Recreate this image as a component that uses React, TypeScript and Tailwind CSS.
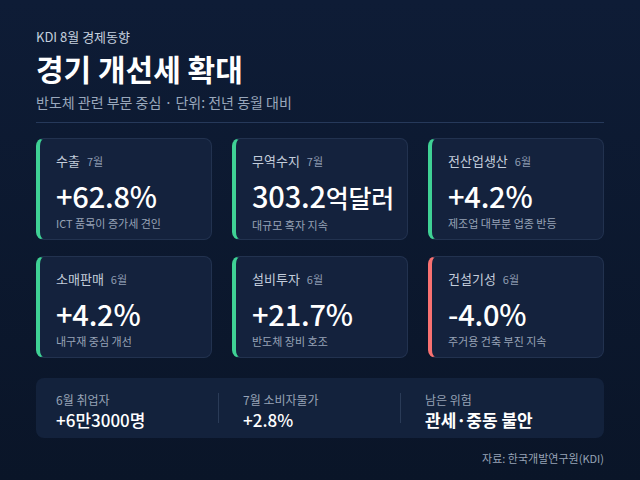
const font = { fontFamily: '"Noto Sans CJK KR", "Noto Sans", sans-serif' }

type Metric = { label: string; month: string; value: string; unit?: string; note: string; down?: boolean }

const metrics: Metric[] = [
  { label: '수출', month: '7월', value: '+62.8%', note: 'ICT 품목이 증가세 견인' },
  { label: '무역수지', month: '7월', value: '303.2', unit: '억달러', note: '대규모 흑자 지속' },
  { label: '전산업생산', month: '6월', value: '+4.2%', note: '제조업 대부분 업종 반등' },
  { label: '소매판매', month: '6월', value: '+4.2%', note: '내구재 중심 개선' },
  { label: '설비투자', month: '6월', value: '+21.7%', note: '반도체 장비 호조' },
  { label: '건설기성', month: '6월', value: '-4.0%', note: '주거용 건축 부진 지속', down: true },
]

function MetricCard({ m }: { m: Metric }) {
  return (
    <div
      className={`h-[102px] rounded-lg border border-[#22324f] border-l-4 bg-[#14223d] pl-4 pr-3 pt-3 ${m.down ? 'border-l-[#f87171]' : 'border-l-[#3fd195]'}`}
    >
      <div className="flex items-baseline leading-[20px]">
        <span className="text-[13px] text-[#c3cddb]">{m.label}</span>
        <span className="ml-[7px] text-[11px] text-[#8e9bb0]">{m.month}</span>
      </div>
      <div className="mt-[6px] whitespace-nowrap text-[29px] font-medium leading-[36px] tracking-[-0.2px] text-white">
        {m.value}
        {m.unit && <span className="text-[25px]">{m.unit}</span>}
      </div>
      <div className="mt-[2px] text-[11px] leading-[16px] text-[#97a3b6]">{m.note}</div>
    </div>
  )
}

export default function App() {
  return (
    <div style={font} className="h-[480px] w-[640px] overflow-hidden bg-gradient-to-b from-[#0e1c36] to-[#0a1528] px-9 pt-[28px]">
      <div className="text-[13px] leading-[18px] text-[#c5d0de]">KDI 8월 경제동향</div>
      <div className="mt-[4px] text-[30px] font-bold leading-[36px] text-white">경기 개선세 확대</div>
      <div className="mt-[6px] text-[14px] leading-[20px] text-[#9aa8bc]">반도체 관련 부문 중심 · 단위: 전년 동월 대비</div>
      <div className="mt-[10px] h-px bg-[#26395a]" />

      <div className="mt-[15px] grid grid-cols-3 gap-x-5 gap-y-4">
        {metrics.map((m) => (
          <MetricCard key={m.label} m={m} />
        ))}
      </div>

      <div className="mt-5 flex h-[60px] items-start rounded-lg bg-[#13223c] px-5 pt-[13px]">
        <div className="w-[162px]">
          <div className="text-[12px] leading-[18px] text-[#97a3b6]">6월 취업자</div>
          <div className="text-[17px] font-medium leading-[22px] text-white">+6만3000명</div>
        </div>
        <div className="mt-[2px] h-[30px] w-px bg-[#2a3b57]" />
        <div className="w-[181px] pl-6">
          <div className="text-[12px] leading-[18px] text-[#97a3b6]">7월 소비자물가</div>
          <div className="text-[17px] font-medium leading-[22px] text-white">+2.8%</div>
        </div>
        <div className="mt-[2px] h-[30px] w-px bg-[#2a3b57]" />
        <div className="flex-1 pl-6">
          <div className="text-[12px] leading-[18px] text-[#97a3b6]">남은 위험</div>
          <div className="text-[17px] font-semibold leading-[22px] text-white">관세·중동 불안</div>
        </div>
      </div>

      <div className="mt-3 text-right text-[11px] leading-[16px] text-[#97a3b6]">자료: 한국개발연구원(KDI)</div>
    </div>
  )
}
